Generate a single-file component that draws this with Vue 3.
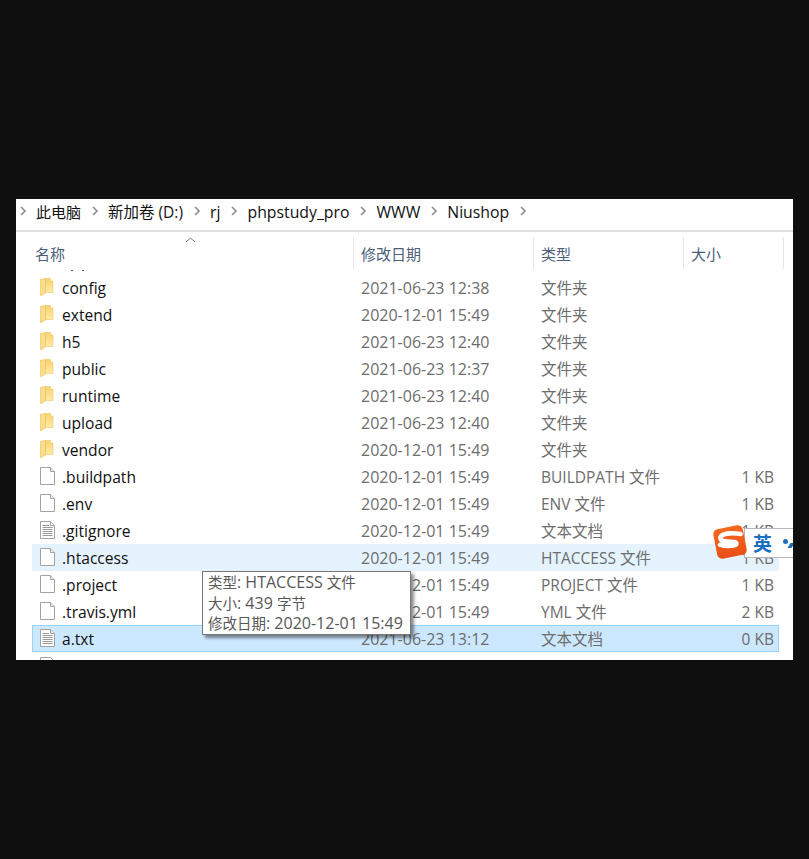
<template>
  <div class="page">
    <div class="explorer">
      <div class="crumbs">
        <template v-for="c in crumbs" :key="c">
          <svg class="chev" width="8" height="10" viewBox="0 0 8 10"><path d="M2 1l4 4-4 4" fill="none" stroke="#8a8a8a" stroke-width="1.6" /></svg>
          <span class="crumb">{{ c }}</span>
        </template>
        <svg class="chev" width="8" height="10" viewBox="0 0 8 10"><path d="M2 1l4 4-4 4" fill="none" stroke="#8a8a8a" stroke-width="1.6" /></svg>
      </div>

      <div class="head">
        <div class="hcell name">
          名称
          <svg class="sort" width="11" height="6" viewBox="0 0 11 6"><path d="M1 5l4.5-4L10 5" fill="none" stroke="#7a7a7a" /></svg>
        </div>
        <div class="hcell date">修改日期</div>
        <div class="hcell type">类型</div>
        <div class="hcell size">大小</div>
      </div>

      <div class="list">
        <div class="clipped"><i></i><i></i></div>
        <div
          v-for="f in files"
          :key="f.name"
          class="row"
          :class="{ hover: f.name === '.htaccess', selected: f.name === 'a.txt' }"
        >
          <svg v-if="f.icon === 'folder'" class="icon" width="15" height="18" viewBox="0 0 15 18">
            <defs>
              <linearGradient id="fold" x1="0" y1="0" x2="0" y2="1">
                <stop offset="0" stop-color="#f8d26e" />
                <stop offset="1" stop-color="#fdeaa8" />
              </linearGradient>
            </defs>
            <path d="M5 .5h5.5V3h2.5v11.5H5z" fill="url(#fold)" stroke="#efc95f" stroke-width=".6" />
            <path d="M0 1.5L5.5.5V15L.8 17.8 0 17z" fill="#f9dc8c" stroke="#e9bf57" stroke-width=".6" />
          </svg>
          <svg v-else class="icon doc" width="15" height="18" viewBox="0 0 15 18">
            <path d="M.5.5h10l4 4v13H.5z" fill="#fff" stroke="#a2a2a2" />
            <path d="M10.5.5v4h4" fill="#eee" stroke="#a2a2a2" />
            <path v-if="f.icon === 'text'" d="M2.5 4.5h6.5M2.5 6.5h10M2.5 8.5h10M2.5 10.5h10M2.5 12.5h10M2.5 14.5h10" stroke="#9a9a9a" />
          </svg>
          <span class="fname">{{ f.name }}</span>
          <span class="fdate">{{ f.date }}</span>
          <span class="ftype">{{ f.type }}</span>
          <span class="fsize">{{ f.size }}</span>
        </div>
        <svg class="next" width="15" height="18" viewBox="0 0 15 18">
          <path d="M.5.5h10l4 4v13H.5z" fill="#fff" stroke="#a2a2a2" />
        </svg>
      </div>

      <div class="tooltip">
        <div><span class="cjk">类型</span>: HTACCESS <span class="cjk">文件</span></div>
        <div><span class="cjk">大小</span>: 439 <span class="cjk">字节</span></div>
        <div><span class="cjk">修改日期</span>: 2020-12-01 15:49</div>
      </div>

      <div class="ime">
        <div class="ime-bar"><b>英</b><span class="dot"></span><span class="tail"></span></div>
        <svg class="ime-logo" width="38" height="38" viewBox="0 0 38 38">
          <defs>
            <linearGradient id="sogou" x1="0" y1="0" x2="0" y2="1">
              <stop offset="0" stop-color="#f4691f" />
              <stop offset="1" stop-color="#ea4f17" />
            </linearGradient>
          </defs>
          <rect x="4" y="4" width="30" height="30" rx="5" fill="url(#sogou)" transform="rotate(-11 19 19)" />
          <path d="M29.5 11C23 9.8 14 10 10.8 12.6c-2.8 2.4-1 5.4 3.2 5.8l9 .7c3.4.3 3.2 2.8-.6 3.4-3.4.6-9 .5-13.4-.7" fill="none" stroke="#fff" stroke-width="4.6" stroke-linecap="round" />
        </svg>
      </div>
    </div>
  </div>
</template>

<script setup>
const crumbs = ['此电脑', '新加卷 (D:)', 'rj', 'phpstudy_pro', 'WWW', 'Niushop']

const folder = (name, date) => ({ name, date, type: '文件夹', size: '', icon: 'folder' })
const file = (name, date, type, size, icon = 'blank') => ({ name, date, type, size, icon })

const files = [
  folder('config', '2021-06-23 12:38'),
  folder('extend', '2020-12-01 15:49'),
  folder('h5', '2021-06-23 12:40'),
  folder('public', '2021-06-23 12:37'),
  folder('runtime', '2021-06-23 12:40'),
  folder('upload', '2021-06-23 12:40'),
  folder('vendor', '2020-12-01 15:49'),
  file('.buildpath', '2020-12-01 15:49', 'BUILDPATH 文件', '1 KB'),
  file('.env', '2020-12-01 15:49', 'ENV 文件', '1 KB'),
  file('.gitignore', '2020-12-01 15:49', '文本文档', '1 KB', 'text'),
  file('.htaccess', '2020-12-01 15:49', 'HTACCESS 文件', '1 KB'),
  file('.project', '2020-12-01 15:49', 'PROJECT 文件', '1 KB'),
  file('.travis.yml', '2020-12-01 15:49', 'YML 文件', '2 KB'),
  file('a.txt', '2021-06-23 13:12', '文本文档', '0 KB', 'text')
]
</script>

<style>
html, body {
  background: #0f0f0f;
}
</style>

<style scoped>
.page {
  height: 859px;
  overflow: hidden;
  padding: 199px 0 0 16px;
  box-sizing: border-box;
  background: #0f0f0f;
  font-family: "Open Sans", "Noto Sans CJK SC", sans-serif;
  font-size: 15.5px;
}

.explorer {
  position: relative;
  width: 777px;
  height: 461px;
  background: #fff;
  overflow: hidden;
}

.crumbs {
  display: flex;
  align-items: center;
  height: 25px;
  padding: 0 0 6px 3px;
  gap: 9px;
  border-bottom: 2px solid #e0e0e0;
  color: #111;
  font-size: 15.8px;
}

.crumb {
  margin-right: 1px;
}

.crumb:nth-of-type(1) {
  font-size: 15px;
}

.crumb:nth-of-type(2) {
  font-size: 15.5px;
}

.chev {
  margin-top: -2px;
}

.head {
  display: flex;
  height: 32px;
  margin-top: 5px;
  color: #4c607a;
  font-size: 15px;
}

.hcell {
  display: flex;
  align-items: center;
  padding-left: 7px;
  border-right: 1px solid #e5e5e5;
  box-sizing: border-box;
  position: relative;
}

.hcell.name {
  width: 338px;
  padding-left: 19px;
}

.hcell.date {
  width: 180px;
}

.hcell.type {
  width: 150px;
}

.hcell.size {
  width: 100px;
}

.sort {
  position: absolute;
  top: 0;
  left: 169px;
}

.clipped {
  display: flex;
  gap: 9px;
  height: 5px;
  padding: 1px 0 0 55px;
  box-sizing: border-box;
}

.clipped i {
  width: 2px;
  height: 1px;
  background: #555;
}

.row {
  display: flex;
  align-items: center;
  height: 27px;
  margin: 0 14px 0 16px;
  box-sizing: border-box;
  color: #111;
}

.row.hover {
  background: #e5f3ff;
}

.row.selected {
  background: #cce8ff;
  box-shadow: inset 0 0 0 1px #99d1ff;
}

.icon {
  flex: none;
  margin: -2px 0 0 8px;
}

.fname {
  width: 299px;
  margin-left: 7px;
  flex: none;
  font-size: 15.6px;
}

.fdate {
  width: 180px;
  flex: none;
  color: #6d6d6d;
  font-size: 16px;
}

.ftype {
  width: 150px;
  flex: none;
  color: #6d6d6d;
}

.fsize {
  width: 83px;
  flex: none;
  text-align: right;
  color: #6d6d6d;
}

.next {
  display: block;
  margin: 5px 0 0 24px;
}

.tooltip {
  position: absolute;
  left: 186px;
  top: 372px;
  width: 209px;
  height: 64px;
  padding: 0 5px;
  box-sizing: border-box;
  background: #fff;
  border: 1px solid #767676;
  box-shadow: 3px 3px 3px rgba(0, 0, 0, 0.45);
  font-size: 16px;
  line-height: 20px;
  color: #575757;
  white-space: nowrap;
}

.tooltip > div {
  height: 20.5px;
}

.cjk {
  font-size: 14.5px;
}

.ime {
  position: absolute;
  left: 695px;
  top: 324px;
  width: 82px;
  height: 38px;
}

.ime-bar {
  position: absolute;
  left: 33px;
  top: 5px;
  width: 60px;
  height: 30px;
  display: flex;
  align-items: center;
  padding-left: 8px;
  box-sizing: border-box;
  background: #fff;
  border: 1px solid #b5b5bd;
  color: #1b6fc2;
  font-size: 19px;
}

.ime-bar b {
  font-weight: 700;
}

.dot {
  width: 5px;
  height: 5px;
  margin: -4px 0 0 11px;
  border-radius: 50%;
  background: #1b6fc2;
}

.tail {
  width: 4px;
  height: 5px;
  margin: 5px 0 0 1px;
  background: #1b6fc2;
  transform: skewX(-30deg);
}

.ime-logo {
  position: absolute;
  left: 0;
  top: 0;
}
</style>
